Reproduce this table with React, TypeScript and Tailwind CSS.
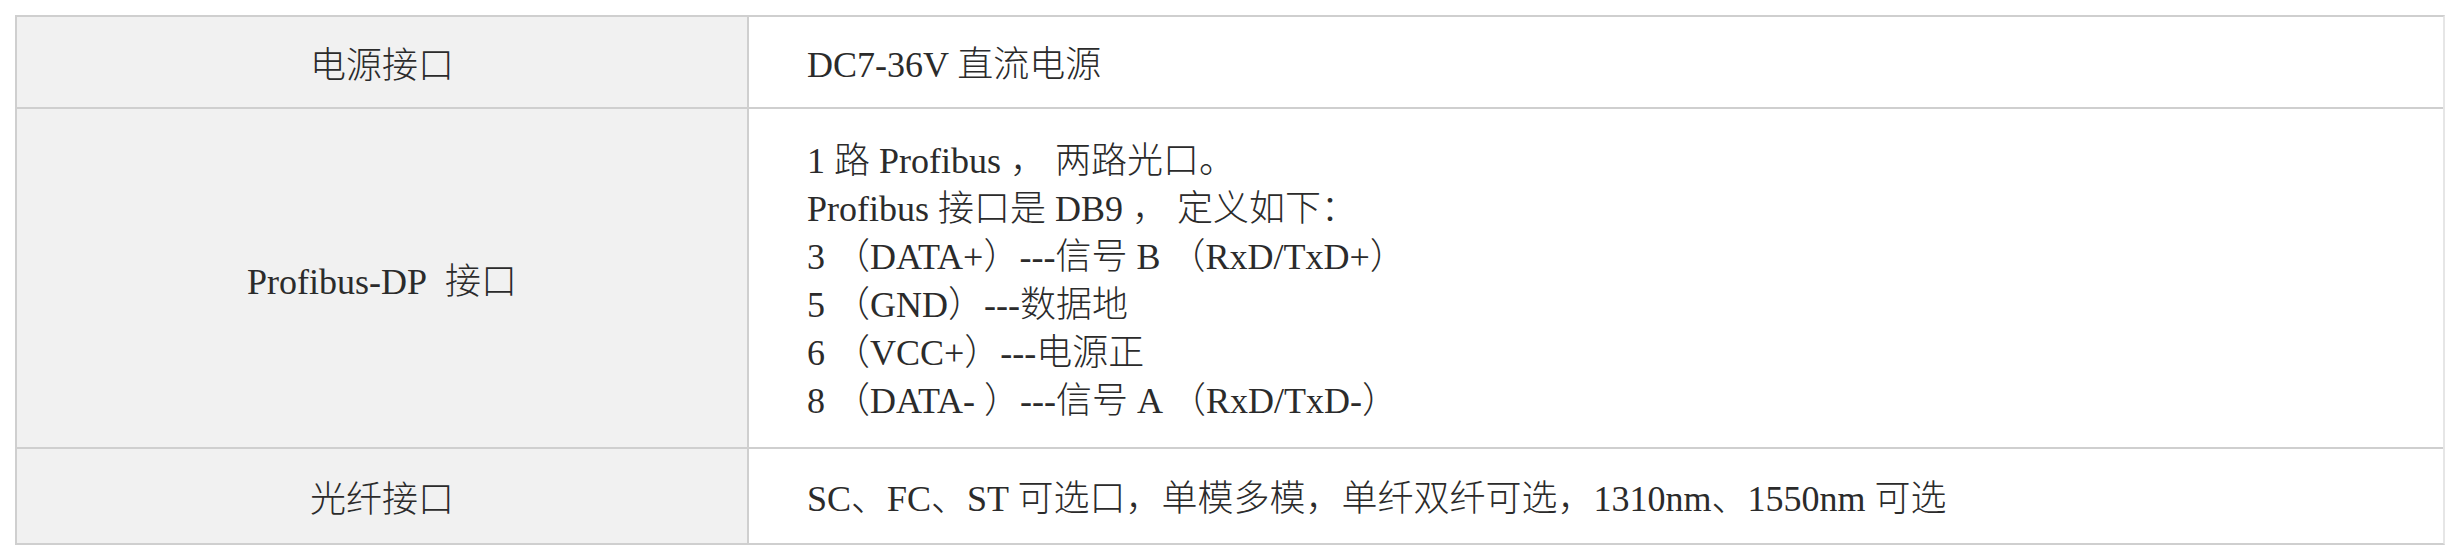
import React from "react";

const font = {
  fontFamily: '"Liberation Serif", "Noto Sans CJK SC", serif',
};

function Row({
  label,
  children,
  pad,
  last,
}: {
  label: string;
  children: React.ReactNode;
  pad: string;
  last?: boolean;
}) {
  return (
    <div className={`flex ${last ? "" : "border-b-2 border-[#cfcfcf]"}`}>
      <div className="w-[732px] shrink-0 bg-[#f1f1f1] flex items-center justify-center pt-[7px] border-r-2 border-[#cfcfcf] whitespace-pre">
        {label}
      </div>
      <div className={`flex-1 bg-white pl-[58px] ${pad}`}>{children}</div>
    </div>
  );
}

export default function App() {
  return (
    <div className="w-[2460px] h-[560px] bg-white pt-[15px] pl-[15px]" style={font}>
      <div className="w-[2430px] border-t-2 border-l-2 border-b-2 border-r-2 border-t-[#cfcfcf] border-l-[#cfcfcf] border-b-[#cfcfcf] border-r-[#e6e6e6] text-[36px] leading-[48px] text-[#2b2b2b] font-light">
        <Row label="电源接口" pad="pt-[24px] pb-[18px]">
          <div>DC7-36V 直流电源</div>
        </Row>
        <Row label={"Profibus-DP\u00a0 接口"} pad="pt-[28px] pb-[22px]">
          <div>1 路 Profibus ， 两路光口。</div>
          <div>Profibus 接口是 DB9 ， 定义如下：</div>
          <div>3 （DATA+）---信号 B （RxD/TxD+）</div>
          <div>5 （GND）---数据地</div>
          <div>6 （VCC+）---电源正</div>
          <div>8 （DATA- ）---信号 A （RxD/TxD-）</div>
        </Row>
        <Row label="光纤接口" pad="pt-[26px] pb-[20px]" last>
          <div>SC、FC、ST 可选口，单模多模，单纤双纤可选，1310nm、1550nm 可选</div>
        </Row>
      </div>
    </div>
  );
}
